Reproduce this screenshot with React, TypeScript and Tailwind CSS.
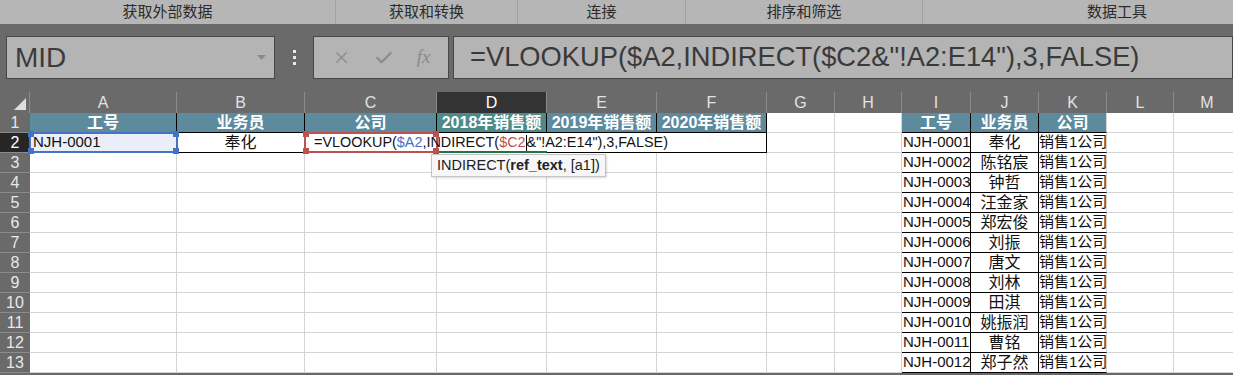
import { X, Check } from "lucide-react";

const COLS: { name: string; w: string }[] = [
  { name: "A", w: "w-[147px]" },
  { name: "B", w: "w-[128px]" },
  { name: "C", w: "w-[132px]" },
  { name: "D", w: "w-[110px]" },
  { name: "E", w: "w-[110px]" },
  { name: "F", w: "w-[110px]" },
  { name: "G", w: "w-[68px]" },
  { name: "H", w: "w-[67px]" },
  { name: "I", w: "w-[69px]" },
  { name: "J", w: "w-[68px]" },
  { name: "K", w: "w-[68px]" },
  { name: "L", w: "w-[67px]" },
  { name: "M", w: "w-[67px]" },
];

const STAFF: [string, string][] = [
  ["NJH-0001", "奉化"],
  ["NJH-0002", "陈铭宸"],
  ["NJH-0003", "钟哲"],
  ["NJH-0004", "汪金家"],
  ["NJH-0005", "郑宏俊"],
  ["NJH-0006", "刘振"],
  ["NJH-0007", "唐文"],
  ["NJH-0008", "刘林"],
  ["NJH-0009", "田淇"],
  ["NJH-0010", "姚振润"],
  ["NJH-0011", "曹铭"],
  ["NJH-0012", "郑子然"],
];

const GROUPS = [
  { label: "获取外部数据", w: "w-[336px]" },
  { label: "获取和转换", w: "w-[182px]" },
  { label: "连接", w: "w-[168px]" },
  { label: "排序和筛选", w: "w-[237px]" },
  { label: "数据工具", w: "w-[388px]" },
];

const HEAD_TOP = ["工号", "业务员", "公司", "2018年销售额", "2019年销售额", "2020年销售额"];
const HEAD_RIGHT = ["工号", "业务员", "公司"];

function Corners({ color }: { color: string }) {
  return (
    <>
      <span className={`absolute -left-[3px] -top-[3px] h-[6px] w-[6px] ${color}`} />
      <span className={`absolute -right-[3px] -top-[3px] h-[6px] w-[6px] ${color}`} />
      <span className={`absolute -left-[3px] -bottom-[3px] h-[6px] w-[6px] ${color}`} />
      <span className={`absolute -right-[3px] -bottom-[3px] h-[6px] w-[6px] ${color}`} />
    </>
  );
}

function Cell({ row, col, w }: { row: number; col: string; w: string }) {
  const base = `${w} h-[20px] shrink-0 flex items-center`;
  const grid = "border-r border-b border-[#d4d4d4]";

  if (row === 1) {
    const ti = "ABCDEF".indexOf(col);
    const ri = "IJK".indexOf(col);
    if (ti >= 0 || ri >= 0) {
      const text = ti >= 0 ? HEAD_TOP[ti] : HEAD_RIGHT[ri];
      const bg = col === "D" ? "bg-[#4d8a88]" : "bg-[#5d8a9c]";
      const right = col === "K" ? "border-r border-r-[#d4d4d4]" : "border-r border-r-black";
      return (
        <div className={`${base} ${bg} ${right} border-b border-b-black justify-center text-[16px] font-bold text-white`}>
          {text}
        </div>
      );
    }
    return <div className={`${base} ${grid}`} />;
  }

  if ("IJK".includes(col) && row <= 13) {
    const [id, name] = STAFF[row - 2];
    const right = col === "K" ? "border-r border-r-[#d4d4d4]" : "border-r border-r-black";
    return (
      <div className={`${base} ${right} border-b border-b-black text-[15px] text-[#111]`}>
        {col === "I" && <span className="pl-[1px] whitespace-nowrap">{id}</span>}
        {col === "J" && <span className="w-full text-center text-[16px]">{name}</span>}
        {col === "K" && <span className="whitespace-nowrap">销售1公司</span>}
      </div>
    );
  }

  if (row === 2) {
    if (col === "A") {
      return (
        <div className={`${base} relative bg-[#e9eef8] border-b border-b-black text-[15px] text-[#111]`}>
          <span className="pl-[3px]">NJH-0001</span>
          <div className="absolute -left-[1px] -top-[1px] -right-[1px] -bottom-[1px] border-2 border-[#4472c4]">
            <Corners color="bg-[#4472c4]" />
          </div>
        </div>
      );
    }
    if (col === "B") {
      return (
        <div className={`${base} border-r border-r-black border-b border-b-black justify-center text-[16px] text-[#111]`}>
          奉化
        </div>
      );
    }
    if (col === "C") {
      return (
        <div className={`${base} relative border-b border-b-black`}>
          <div className="absolute -left-[1px] -top-[1px] -right-[1px] -bottom-[1px] border-2 border-[#c0504d]">
            <Corners color="bg-[#c0504d]" />
          </div>
          <span className="relative z-10 whitespace-nowrap pl-[9px] text-[14.4px] text-[#111]">
            =VLOOKUP(<span className="text-[#4472c4]">$A2</span>,INDIRECT(
            <span className="text-[#c0504d]">$C2</span>
            <span className="inline-block h-[16px] w-px bg-black align-middle" />
            &amp;"!A2:E14"),3,FALSE)
          </span>
        </div>
      );
    }
    if (col === "D") {
      return <div className={`${base} border-b-2 border-b-[#217346]`} />;
    }
    if (col === "E") {
      return <div className={`${base} border-b border-b-black`} />;
    }
    if (col === "F") {
      return <div className={`${base} border-r border-r-black border-b border-b-black`} />;
    }
  }

  return <div className={`${base} ${grid}`} />;
}

export default function App() {
  const rows = Array.from({ length: 13 }, (_, i) => i + 1);

  return (
    <div className="h-[375px] w-[1233px] overflow-hidden bg-[#6a6a6a] font-['Liberation_Sans','Noto_Sans_CJK_SC',sans-serif]">
      {/* ribbon group labels */}
      <div className="flex h-[24px] bg-[#b6b6b6] text-[15px] text-[#2b2b2b]">
        {GROUPS.map((g, i) => (
          <div
            key={g.label}
            className={`${g.w} shrink-0 flex items-center justify-center ${i < GROUPS.length - 1 ? "border-r border-[#a2a2a2]" : ""}`}
          >
            {g.label}
          </div>
        ))}
      </div>

      {/* name box + formula bar */}
      <div className="flex h-[68px] items-start pt-[12px] pl-[6px]">
        <div className="flex h-[43px] w-[269px] items-center justify-between border border-[#474747] bg-[#b4b4b4] pl-[8px] pr-[8px]">
          <span className="text-[28px] text-[#3c3c3c]">MID</span>
          <svg width="9" height="5" viewBox="0 0 9 5">
            <polygon points="0,0 9,0 4.5,5" fill="#8a8a8a" />
          </svg>
        </div>
        <div className="flex h-[43px] w-[38px] flex-col items-center justify-center gap-[3px]">
          <span className="h-[3px] w-[3px] bg-[#e8e8e8]" />
          <span className="h-[3px] w-[3px] bg-[#e8e8e8]" />
          <span className="h-[3px] w-[3px] bg-[#e8e8e8]" />
        </div>
        <div className="flex h-[43px] w-[136px] items-center justify-around border border-[#474747] bg-[#b4b4b4] px-[6px] text-[#8a8a8a]">
          <X size={19} strokeWidth={1.6} />
          <Check size={20} strokeWidth={2.6} />
          <span className="font-['Liberation_Serif',serif] text-[19px] italic">fx</span>
        </div>
        <div className="ml-[4px] flex h-[43px] flex-1 items-center border border-[#474747] bg-[#b4b4b4] pl-[16px]">
          <span className="whitespace-nowrap text-[27.3px] text-[#3a3a3a]">
            =VLOOKUP($A2,INDIRECT($C2&amp;"!A2:E14"),3,FALSE)
          </span>
        </div>
      </div>

      {/* sheet */}
      <div className="relative bg-white">
        <div className="flex h-[21px] bg-[#6a6a6a]">
          <div className="flex w-[30px] shrink-0 items-end justify-end pb-[3px] pr-[3px] border-r border-[#8a8a8a]">
            <svg width="12" height="12" viewBox="0 0 12 12">
              <polygon points="12,0 12,12 0,12" fill="#dedede" />
            </svg>
          </div>
          {COLS.map((c) => (
            <div
              key={c.name}
              className={`${c.w} shrink-0 flex items-center justify-center border-r border-[#8a8a8a] text-[16px] ${
                c.name === "D" ? "bg-[#333333] text-white" : "text-[#e2e2e2]"
              }`}
            >
              {c.name}
            </div>
          ))}
        </div>

        {rows.map((r) => (
          <div key={r} className="flex h-[20px]">
            <div
              className={`flex w-[30px] shrink-0 items-center justify-center border-b border-[#8c8c8c] text-[16px] ${
                r === 2 ? "bg-[#262626] text-white" : "bg-[#6a6a6a] text-[#e8e8e8]"
              }`}
            >
              {r}
            </div>
            {COLS.map((c) => (
              <Cell key={c.name} row={r} col={c.name} w={c.w} />
            ))}
          </div>
        ))}

        <div className="absolute left-[431px] top-[62px] z-20 flex h-[23px] items-center border border-[#c4c4c4] bg-[#f7f7f7] px-[5px] text-[14.5px] text-[#222] shadow-[1px_1px_2px_rgba(0,0,0,0.15)]">
          INDIRECT(<span className="font-bold">ref_text</span>, [a1])
        </div>
      </div>
    </div>
  );
}
